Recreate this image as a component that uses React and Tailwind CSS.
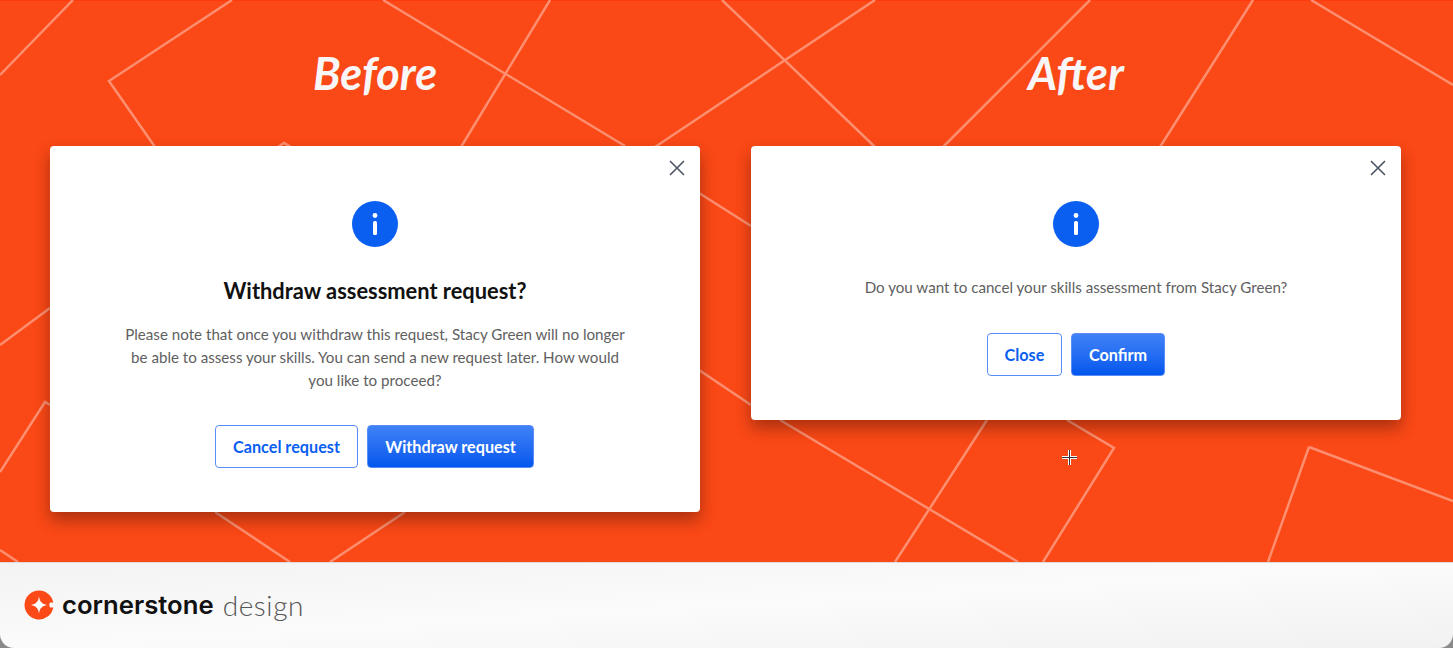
const lines = [
  "M0 75L73 0","M232 0L109 81L155 147","M383 0L625 146","M550 0L461 147","M722 0L875 147","M875 0L655 147",
  "M1090 0L943 147","M1253 0L1160 147","M1311 0L1453 85","M0 345L50 308","M0 472L45 402L50 405","M0 550L18 562",
  "M278 147L284 143L291 147","M699 193L751 226","M699 370L751 405","M215 512L290 562","M405 512L330 562",
  "M780 420L1018 562","M987 420L895 562","M1067 420L1114 448L1043 562","M1309 447L1268 562","M1309 447L1453 501",
];

function InfoIcon() {
  return (
    <svg width="46" height="46" viewBox="0 0 46 46" className="block">
      <circle cx="23" cy="23" r="23" fill="#0a5ff0" />
      <circle cx="23" cy="14.5" r="2.4" fill="#fff" />
      <rect x="21" y="20" width="4" height="14" rx="1.6" fill="#fff" />
    </svg>
  );
}

function CloseIcon() {
  return (
    <svg width="16" height="16" viewBox="0 0 16 16" className="absolute right-[15px] top-[14px]">
      <path d="M1 1L15 15M15 1L1 15" stroke="#4b5563" strokeWidth="1.6" fill="none" />
    </svg>
  );
}

function OutlineButton({ children, w }) {
  return (
    <button className={`h-[43px] ${w} rounded-[4px] border border-[#5b8cf5] bg-white pt-[2px] text-[16.2px] font-bold text-[#0a5ff0]`}>
      {children}
    </button>
  );
}

function PrimaryButton({ children, w }) {
  return (
    <button className={`h-[43px] ${w} rounded-[4px] border border-[#5b8cf5] bg-gradient-to-b from-[#3f82f6] to-[#0056ee] pt-[2px] text-[16.2px] font-bold text-white`}>
      {children}
    </button>
  );
}

function Dialog({ className, children }) {
  return (
    <div className={`relative flex w-[650px] flex-col items-center rounded-[4px] bg-white pt-[55px] shadow-[0_8px_16px_rgba(0,0,0,0.32)] ${className}`}>
      <CloseIcon />
      <InfoIcon />
      {children}
    </div>
  );
}

export default function App() {
  return (
    <div className="flex h-[648px] w-[1453px] flex-col overflow-hidden bg-[#8a8a8a] font-['Lato','Liberation_Sans',sans-serif]">
      <div className="relative h-[562px] shrink-0 border-t border-[#ff3a10] bg-[#fa4816]">
        <svg width="1453" height="562" viewBox="0 0 1453 562" className="absolute left-0 top-[-1px]">
          {lines.map((d) => (
            <path key={d} d={d} stroke="#fd8f70" strokeWidth="2.5" fill="none" />
          ))}
        </svg>
        <div className="relative flex gap-[51px] pl-[50px]">
          <div className="flex w-[650px] flex-col items-center">
            <h2 className="mt-[45px] h-[54px] text-[45px] font-bold italic leading-[54px] text-[#f8f6f6]">Before</h2>
            <div className="mt-[46px] w-full">
              <Dialog className="h-[366px]">
                <h3 className="mt-[29px] text-[21.85px] font-bold leading-[30px] text-[#111]">Withdraw assessment request?</h3>
                <p className="mt-[17px] w-[510px] text-center text-[15.15px] leading-[23px] text-[#606060]">
                  Please note that once you withdraw this request, Stacy Green will no longer be able to assess your skills. You can send a new request later. How would you like to proceed?
                </p>
                <div className="mt-[33px] flex gap-[9px] pr-[1px]">
                  <OutlineButton w="w-[143px]">Cancel request</OutlineButton>
                  <PrimaryButton w="w-[167px]">Withdraw request</PrimaryButton>
                </div>
              </Dialog>
            </div>
          </div>
          <div className="flex w-[650px] flex-col items-center">
            <h2 className="mt-[45px] h-[54px] text-[45px] font-bold italic leading-[54px] text-[#f8f6f6]">After</h2>
            <div className="mt-[46px] w-full">
              <Dialog className="h-[274px]">
                <p className="mt-[29px] text-center text-[15.15px] leading-[23px] text-[#606060]">
                  Do you want to cancel your skills assessment from Stacy Green?
                </p>
                <div className="mt-[34px] flex gap-[9px]">
                  <OutlineButton w="w-[75px]">Close</OutlineButton>
                  <PrimaryButton w="w-[94px]">Confirm</PrimaryButton>
                </div>
              </Dialog>
            </div>
          </div>
        </div>
        <svg width="17" height="17" viewBox="0 0 17 17" className="absolute left-[1061px] top-[448px]">
          <path d="M8.5 1V16M1 8.5H16" stroke="#fff" strokeWidth="3" />
          <path d="M8.5 1V16M1 8.5H16" stroke="#333" strokeWidth="1" />
        </svg>
      </div>
      <div className="flex h-[86px] items-center rounded-b-[14px] border-t border-[#dcdcdc] bg-gradient-to-br from-[#f3f3f3] via-[#fbfbfb] to-[#f1f1f1] pb-[2px] pl-[24px]">
        <svg width="30" height="30" viewBox="0 0 30 30" className="block">
          <path d="M15 0.5A14.5 14.5 0 0 1 29.3 12.5H26.5C25 12.5 25 17.5 26.5 17.5H29.3A14.5 14.5 0 1 1 15 0.5Z" fill="#fb4917" />
          <path d="M15 6.5C15.8 11.8 18 14 23 15C18 16 15.8 18.2 15 23.5C14.2 18.2 12 16 7 15C12 14 14.2 11.8 15 6.5Z" fill="#fff" />
        </svg>
        <span className="ml-[8px] font-['Inter',sans-serif] text-[25.7px] font-semibold leading-none text-[#111]">cornerstone</span>
        <span className="ml-[9px] text-[28px] font-light leading-none tracking-[0.6px] text-[#555]">design</span>
      </div>
    </div>
  );
}
